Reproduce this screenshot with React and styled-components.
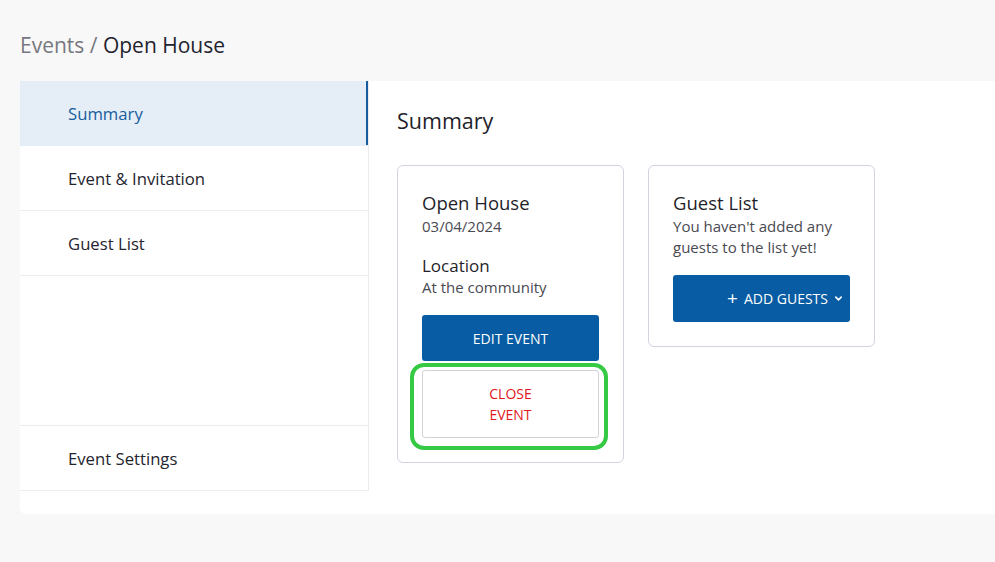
import React from 'react';
import styled, { createGlobalStyle } from 'styled-components';

const GlobalStyle = createGlobalStyle`
  body {
    margin: 0;
    background: #f8f8f8;
    font-family: "Open Sans", "Liberation Sans", sans-serif;
    color: #1f1f2b;
  }
`;

const Page = styled.div`
  padding: 30px 0 48px 20px;
`;

const Breadcrumb = styled.div`
  font-size: 21px;
  line-height: 30px;
  height: 30px;
  margin-bottom: 21px;
  color: #23232f;
  span { color: #77777f; }
`;

const Panel = styled.div`
  display: flex;
  background: #fff;
  height: 433px;
  border-radius: 0 0 0 6px;
`;

const Sidebar = styled.nav`
  width: 348px;
  display: flex;
  flex-direction: column;
  align-self: flex-start;
  border-right: 1px solid #ececee;
`;

const NavItem = styled.div`
  height: 65px;
  box-sizing: border-box;
  display: flex;
  align-items: center;
  padding-left: 48px;
  font-size: 16.7px;
  color: ${p => (p.active ? '#175d9e' : '#25252f')};
  background: ${p => (p.active ? '#e5eef6' : '#fff')};
  border-bottom: 1px solid ${p => (p.active ? 'transparent' : '#ececee')};
  box-shadow: ${p => (p.active ? 'inset -2px 0 0 #175d9e' : 'none')};
`;

const Spacer = styled.div`
  height: 149px;
  border-bottom: 1px solid #ececee;
`;

const Content = styled.section`
  flex: 1;
  padding: 25px 0 0 28px;
`;

const Title = styled.h2`
  margin: 0 0 29px;
  font-size: 21.5px;
  line-height: 30px;
  font-weight: 400;
`;

const Cards = styled.div`
  display: flex;
  align-items: flex-start;
  gap: 24px;
`;

const Card = styled.div`
  width: 227px;
  box-sizing: border-box;
  border: 1px solid #d4d3e0;
  border-radius: 6px;
  padding: 24px 24px 24px;
`;

const CardTitle = styled.div`
  font-size: ${p => p.size || 18.5}px;
  line-height: ${p => (p.gap ? 23 : 26)}px;
  margin-top: ${p => p.gap || 0}px;
`;

const CardText = styled.div`
  font-size: 15px;
  line-height: 21px;
  color: #4a4a52;
`;

const Button = styled.button`
  display: flex;
  align-items: center;
  justify-content: ${p => p.align || 'center'};
  width: 177px;
  height: ${p => p.h || 46}px;
  box-sizing: border-box;
  margin-top: ${p => p.mt || 0}px;
  padding: 0 ${p => (p.align ? 7 : 10)}px;
  border-radius: 3px;
  font-family: inherit;
  font-size: 14px;
  line-height: 21px;
  font-weight: 500;
  text-align: center;
  cursor: pointer;
  ${p => p.outline ? `
    background: #fff;
    color: #e3161b;
    border: 1px solid #d2d2d8;
    font-weight: 400;
    padding: 0 58px;
  ` : `
    background: #075ca3;
    color: #fff;
    border: none;
  `}
`;

const Highlight = styled.div`
  position: relative;
  margin-top: 9px;
  &::after {
    content: '';
    position: absolute;
    inset: -7px -9px -12px -12px;
    border: 4px solid #36c944;
    border-radius: 14px;
    pointer-events: none;
  }
`;

const Plus = styled.span`
  font-size: 19px;
  font-weight: 400;
  margin-right: 6px;
`;

const Chevron = () => (
  <svg width="9" height="9" viewBox="0 0 10 10" style={{ marginLeft: 6 }}>
    <path d="M2 3.5 L5 6.5 L8 3.5" fill="none" stroke="#fff" strokeWidth="1.8" strokeLinecap="round" strokeLinejoin="round" />
  </svg>
);

export default function App() {
  return (
    <>
      <GlobalStyle />
      <Page>
        <Breadcrumb><span>Events /</span> Open House</Breadcrumb>
        <Panel>
          <Sidebar>
            <NavItem active>Summary</NavItem>
            <NavItem>Event &amp; Invitation</NavItem>
            <NavItem>Guest List</NavItem>
            <Spacer />
            <NavItem>Event Settings</NavItem>
          </Sidebar>
          <Content>
            <Title>Summary</Title>
            <Cards>
              <Card>
                <CardTitle>Open House</CardTitle>
                <CardText>03/04/2024</CardText>
                <CardTitle size={17} gap={17}>Location</CardTitle>
                <CardText>At the community</CardText>
                <Button mt={17}>EDIT EVENT</Button>
                <Highlight>
                  <Button outline h={68}>CLOSE EVENT</Button>
                </Highlight>
              </Card>
              <Card>
                <CardTitle>Guest List</CardTitle>
                <CardText>You haven't added any guests to the list yet!</CardText>
                <Button mt={17} h={47} align="flex-end"><Plus>+</Plus>ADD GUESTS<Chevron /></Button>
              </Card>
            </Cards>
          </Content>
        </Panel>
      </Page>
    </>
  );
}
